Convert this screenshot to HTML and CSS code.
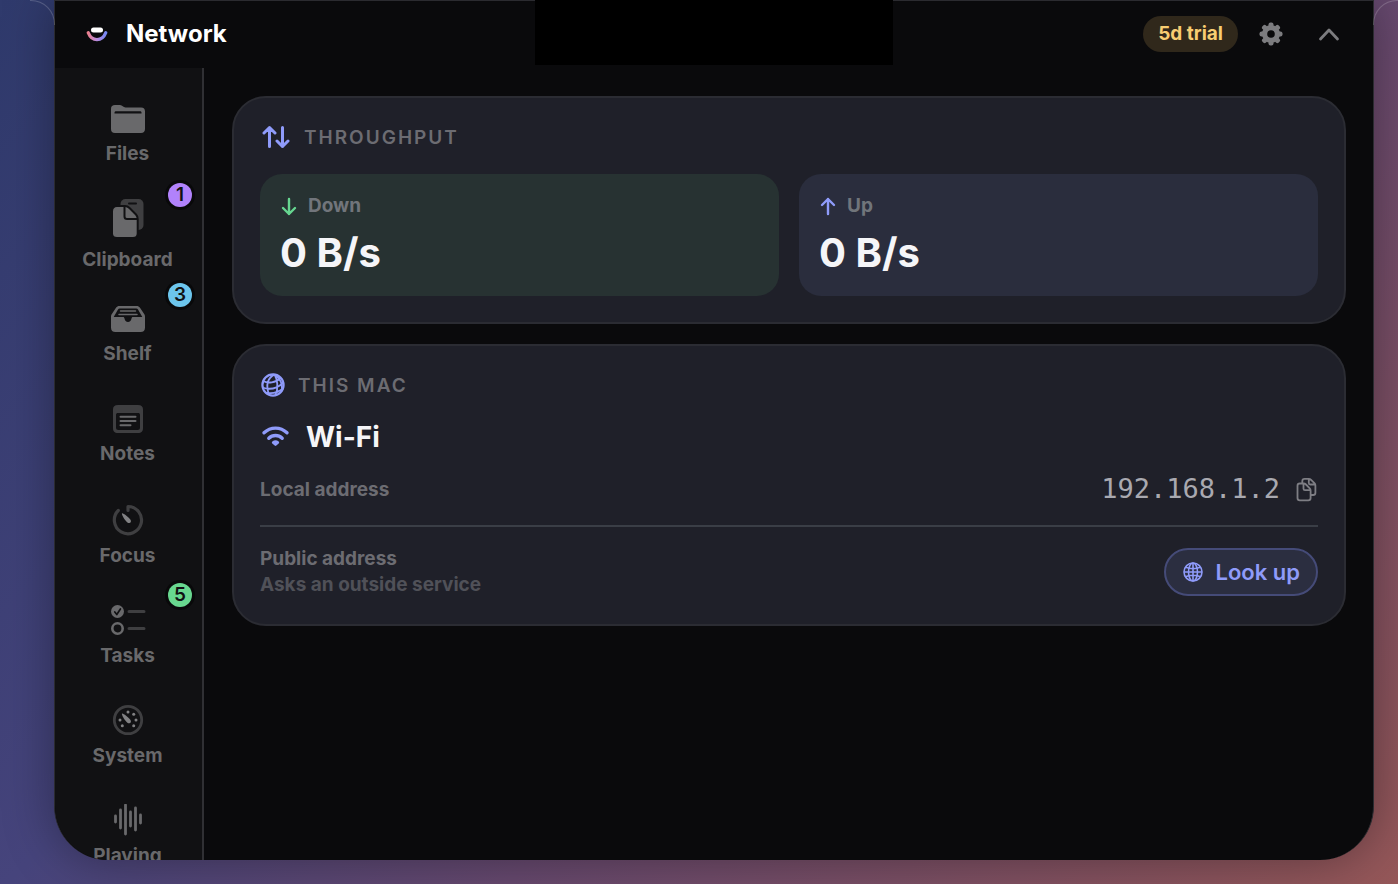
FILE: index.html
```html
<!DOCTYPE html>
<html lang="en">

<head>
  <meta charset="utf-8">
  <title>Network</title>

  <link rel="stylesheet" href="styles.css">
</head>

<body>
  <div class="panel">
    <div class="notch"></div>

    <header class="topbar">
      <svg class="logo" width="24" height="24" viewBox="0 0 24 24" fill="none">
        <defs>
          <linearGradient id="smile" x1="2" y1="0" x2="22" y2="0" gradientUnits="userSpaceOnUse">
            <stop offset="0" stop-color="#ee7f86" />
            <stop offset="0.5" stop-color="#b98be0" />
            <stop offset="1" stop-color="#6d86f5" />
          </linearGradient>
        </defs>
        <path d="M3.2 10.7c1.8 4.600 5 7 8.800 7s7-2.400 8.800-7" stroke="url(#smile)" stroke-width="3.200" stroke-linecap="round" />
        <rect x="6" y="5.500" width="12" height="5" rx="2.500" fill="#fff" />
      </svg>
      <h1>Network</h1>

      <button class="trial">5d trial</button>
      <button class="icon-btn" aria-label="Settings">
        <svg width="24" height="24" viewBox="0 0 24 24">
          <g fill="#7c7c7f">
            <rect x="9.500" y="0.500" width="5" height="23" rx="2" />
            <rect x="9.500" y="0.500" width="5" height="23" rx="2" transform="rotate(45 12 12)" />
            <rect x="9.500" y="0.500" width="5" height="23" rx="2" transform="rotate(90 12 12)" />
            <rect x="9.500" y="0.500" width="5" height="23" rx="2" transform="rotate(135 12 12)" />
            <circle cx="12" cy="12" r="9" />
          </g>
          <circle cx="12" cy="12" r="3.800" fill="#0a0a0c" />
        </svg>
      </button>
      <button class="icon-btn" aria-label="Collapse">
        <svg width="24" height="24" viewBox="0 0 24 24" fill="none" stroke="#7c7c7f" stroke-width="2.800" stroke-linecap="round" stroke-linejoin="round">
          <path d="M3.500 17 12 8 20.500 17" />
        </svg>
      </button>
    </header>

    <div class="content">
      <nav class="sidebar">
        <a class="nav-item" href="#files">
          <svg width="36" height="32" viewBox="0 0 36 32">
            <path fill="#69696b" d="M1 6c0-3 1.500-4 4-4h5c2.500 0 3 2.500 5.500 2.500H31c2.800 0 4 1.500 4 4V26c0 2.700-1.500 4-4 4H5c-2.700 0-4-1.500-4-4z" />
            <path d="M4.500 10.500V9.800c0-1 .5-1.500 1.500-1.500h24c1 0 1.500.5 1.500 1.500v.7z" fill="#111113" />
          </svg>
          <span>Files</span>
        </a>
        <a class="nav-item nav-item--tall" href="#clipboard">
          <svg width="36" height="46" viewBox="0 0 36 46">
            <rect x="10.500" y="4" width="23" height="31" rx="5" fill="#3f3f41" />
            <rect x="18" y="7.500" width="9" height="2" rx="1" fill="#111113" />
            <path d="M7 11h8c2 0 3 .5 4.500 2l6.500 6.500c1.300 1.400 1.700 2.500 1.700 4.500v14.500c0 3-1.700 4.500-4.700 4.500H7c-3 0-5-1.500-5-4.500v-22C2 13 4 11 7 11z" fill="#69696b" stroke="#111113" stroke-width="2" />
            <path d="M14.500 12v9.500c0 1.800.8 2.600 2.600 2.600h10" fill="none" stroke="#111113" stroke-width="2" />
          </svg>
          <span>Clipboard</span>
          <span class="badge badge--purple">1</span>
        </a>
        <a class="nav-item" href="#shelf">
          <svg width="36" height="32" viewBox="0 0 36 32">
            <path fill="#69696b" d="M9.500 3h17c1.600 0 2.600.5 3.500 1.800l4 6c.8 1.200 1 2 1 3.200v10.500c0 3-1.500 4.500-4.500 4.500h-25C2.500 29 1 27.500 1 24.500V14c0-1.200.2-2 1-3.200l4-6C6.900 3.500 7.900 3 9.500 3z" />
            <path d="M9.800 5.500h16.400c.9 0 1.400.3 1.800.9l4.300 7.600H23c-1 0-1.300.6-1.500 1.500-.4 2.200-1.600 3.500-3.500 3.500s-3.100-1.300-3.500-3.500c-.2-.9-.5-1.500-1.500-1.500H3.700L8 6.400c.4-.6.9-.9 1.800-.9z" fill="#111113" />
            <path d="M10.500 8h15M9 11.500h18" stroke="#69696b" stroke-width="1.500" stroke-linecap="round" />
          </svg>
          <span>Shelf</span>
          <span class="badge badge--blue">3</span>
        </a>
        <a class="nav-item" href="#notes">
          <svg width="36" height="32" viewBox="0 0 36 32">
            <path fill="#3f3f41" fill-rule="evenodd" d="M8 2h20c3.500 0 5 1.500 5 4.500v18.500c0 3.500-1.500 5-5 5H8c-3.500 0-5-1.500-5-5V6.500C3 3.500 4.500 2 8 2zM6 12v12.500C6 26.200 6.800 27 8.500 27h19c1.700 0 2.500-.8 2.500-2.500V12c0-1.500-.8-2-2-2H8c-1.200 0-2 .5-2 2z" />
            <path d="M10.500 13.800h15M10.500 18h15M10.500 22.300h10" stroke="#69696b" stroke-width="2" stroke-linecap="round" />
          </svg>
          <span>Notes</span>
        </a>
        <a class="nav-item nav-item--low" href="#focus">
          <svg width="36" height="32" viewBox="0 0 36 32" fill="none">
            <path d="M18 6.500V2.500A13.600 13.600 0 1 1 8.300 6.500" stroke="#3f3f41" stroke-width="3.200" stroke-linecap="round" stroke-linejoin="round" />
            <path d="M12 9.300c1-.6 6.200 3.600 8.300 6.200 1.800 2.300-.7 4.700-2.900 3C14.800 16.400 11.200 10.300 12 9.300z" fill="#828284" />
          </svg>
          <span>Focus</span>
        </a>
        <a class="nav-item nav-item--low" href="#tasks">
          <svg width="36" height="32" viewBox="0 0 36 32" fill="none">
            <circle cx="7.500" cy="7.500" r="6.500" fill="#69696b" />
            <path d="M4.800 8l2 2.500 3.600-5.500" stroke="#111113" stroke-width="1.700" stroke-linecap="round" stroke-linejoin="round" />
            <circle cx="7.500" cy="24.500" r="5.200" stroke="#69696b" stroke-width="2.600" />
            <path d="M19 7.500h15M19 24.500h15" stroke="#3f3f41" stroke-width="3" stroke-linecap="round" />
          </svg>
          <span>Tasks</span>
          <span class="badge badge--green">5</span>
        </a>
        <a class="nav-item nav-item--low" href="#system">
          <svg width="36" height="32" viewBox="0 0 36 32" fill="none">
            <circle cx="18" cy="16" r="13.700" stroke="#3f3f41" stroke-width="2.800" />
            <path d="M12 9.500c1-.6 6.200 3.600 8.300 6.200 1.800 2.300-.7 4.700-2.900 3C14.800 16.600 11.200 10.500 12 9.500z" fill="#828284" />
            <g fill="#828284">
              <circle cx="18" cy="8" r="1.500" />
              <circle cx="23.700" cy="10.300" r="1.500" />
              <circle cx="26" cy="16" r="1.500" />
              <circle cx="23.700" cy="21.700" r="1.500" />
              <circle cx="12.300" cy="21.700" r="1.500" />
              <circle cx="10" cy="16" r="1.500" />
            </g>
          </svg>
          <span>System</span>
        </a>
        <a class="nav-item nav-item--low" href="#playing">
          <svg width="36" height="32" viewBox="0 0 36 32">
            <path d="M5.500 12v6M10.500 6v18M15.500 1v29M20.500 8v14M25.500 4v22M30.500 11v8" stroke="#69696b" stroke-width="2.800" stroke-linecap="round" />
          </svg>
          <span>Playing</span>
        </a>
      </nav>

      <main class="main">
        <section class="card">
          <h2 class="card-title card-title--wide">
            <svg width="30" height="26" viewBox="0 0 30 26" fill="none" stroke="#8f9bfa" stroke-width="3" stroke-linecap="round" stroke-linejoin="round">
              <path d="M9.500 22.500v-19M4 9 9.500 3.500 15 9M22.500 3.500v19M17 17l5.500 5.500L28 17" />
            </svg>
            Throughput
          </h2>
          <div class="tiles">
            <div class="tile tile--down">
              <div class="tile-label">
                <svg width="18" height="20" viewBox="0 0 18 20" fill="none" stroke="#66d690" stroke-width="2.400" stroke-linecap="round" stroke-linejoin="round">
                  <path d="M9 3v15M3 12l6 6 6-6" />
                </svg>
                Down
              </div>
              <div class="tile-value">0 B/s</div>
            </div>
            <div class="tile tile--up">
              <div class="tile-label">
                <svg width="18" height="20" viewBox="0 0 18 20" fill="none" stroke="#8f9bfa" stroke-width="2.400" stroke-linecap="round" stroke-linejoin="round">
                  <path d="M9 18V3M3 9l6-6 6 6" />
                </svg>
                Up
              </div>
              <div class="tile-value">0 B/s</div>
            </div>
          </div>
        </section>

        <section class="card">
          <h2 class="card-title">
            <svg width="26" height="26" viewBox="0 0 26 26" fill="none" stroke="#8f9bfa" stroke-width="1.800">
              <circle cx="13" cy="13" r="10.600" stroke-width="2.200" />
              <path d="M14.500 2.400C8 6 5.500 13 9 22.500M14.500 2.400c3 5.500 4 13 1 21M14.500 2.400c5 3.500 8 8.500 7.500 15M3 9c5 2.500 12.500 2 17.500-3M2.500 15.500c7 2.500 14.500 1 20.500-4.500M5.500 20.500c6 1.500 12.500 0 17.500-4" />
            </svg>
            This Mac
          </h2>

          <div class="connection">
            <svg width="32" height="26" viewBox="0 0 32 26" fill="none" stroke="#8f9bfa" stroke-width="3.400" stroke-linecap="round">
              <path d="M4 8.800c6.600-6.300 16.400-6.300 23 0M8.800 14.200c3.800-3.700 9.600-3.700 13.400 0" />
              <path d="M15.500 20.700l-2.400-2.200c1.400-1.200 3.400-1.200 4.800 0z" fill="#8f9bfa" stroke-width="2.500" stroke-linejoin="round" />
            </svg>
            <h3>Wi-Fi</h3>
          </div>

          <div class="row row--local">
            <span class="row-label">Local address</span>
            <code class="address">192.168.1.2</code>
            <button class="copy-btn" aria-label="Copy address">
              <svg width="22" height="26" viewBox="0 0 22 26" fill="none" stroke="#7e7e84" stroke-width="1.800" stroke-linejoin="round">
                <path d="M3.800 7.500h3.700c1.100 0 1.800.3 2.500 1l3.700 3.800c.7.7.9 1.400.9 2.400v7.300c0 1.600-.8 2.300-2.300 2.300H3.800c-1.500 0-2.300-.7-2.300-2.300V9.800c0-1.600.8-2.300 2.300-2.300z" />
                <path d="M7.500 7.700v5c0 1 .5 1.500 1.500 1.500h5.300M6.300 7.300V5.200c0-1.600.8-2.300 2.300-2.300h4.200c1 0 1.600.3 2.300 1l3.300 3.300c.7.7 1 1.300 1 2.300v7.200c0 1.600-.8 2.300-2.300 2.300h-2.300M12.800 3.200v3.800c0 1 .5 1.500 1.500 1.500h4.800" />
              </svg>
            </button>
          </div>

          <div class="row row--public">
            <div class="row-text">
              <span class="row-label">Public address</span>
              <span class="row-hint">Asks an outside service</span>
            </div>
            <button class="lookup-btn">
              <svg width="22" height="22" viewBox="0 0 22 22" fill="none" stroke="#8f9bfa" stroke-width="1.600">
                <circle cx="11" cy="11" r="9" />
                <ellipse cx="11" cy="11" rx="4.500" ry="9" />
                <path d="M11 2v18M2 11h18M3.500 6.300c4.500 1.700 10.500 1.700 15 0M3.500 15.700c4.500-1.700 10.500-1.700 15 0" />
              </svg>
              Look up
            </button>
          </div>
        </section>
      </main>
    </div>
  </div>
</body>

</html>
```
FILE: styles.css
```css
* {
  margin: 0;
  padding: 0;
  box-sizing: border-box;
}

:root {
  --panel: #0a0a0c;
  --sidebar: #111113;
  --card: #1f2029;
  --line: #303034;
  --muted: #6c6c72;
  --accent: #8f9bfa;
}

body {
  height: 100vh;
  padding: 0 24px 24px 54px;
  overflow: hidden;
  font-family: 'Inter', 'Liberation Sans', sans-serif;
  font-size: 19px;
  font-weight: 700;
  color: #f5f5f8;
  background: linear-gradient(135deg, #2f3a6c 0%, #46447c 39%, #67496f 61%, #955758 100%);
}

button {
  font: inherit;
  border: none;
  background: none;
  cursor: pointer;
}

svg {
  display: block;
  flex-shrink: 0;
}

.panel {
  position: relative;
  display: flex;
  flex-direction: column;
  height: 100%;
  background-color: var(--panel);
  border: 1px solid #2b2b30;
  border-bottom: none;
  border-radius: 0 0 54px 54px;
  box-shadow: 0 0 50px rgba(0, 0, 0, 0.35);
}

/* Flared corners where the panel meets the menu bar */
.panel::before,
.panel::after {
  content: '';
  position: absolute;
  top: -1px;
  width: 24px;
  height: 24px;
  border-top: 1px solid rgba(255, 255, 255, 0.18);
}

.panel::before {
  right: 100%;
  border-right: 1px solid rgba(255, 255, 255, 0.18);
  border-top-right-radius: 24px;
}

.panel::after {
  left: 100%;
  border-left: 1px solid rgba(255, 255, 255, 0.18);
  border-top-left-radius: 24px;
}

.notch {
  position: absolute;
  top: -1px;
  left: 50%;
  width: 358px;
  height: 65px;
  margin-left: -179px;
  background-color: #000;
}

.topbar {
  display: flex;
  align-items: center;
  height: 67px;
  padding: 0 32px 2px 30px;
}

.topbar h1 {
  flex: 1;
  margin-left: 17px;
  font-size: 24px;
  font-weight: 700;
  color: #fff;
}

.trial {
  height: 36px;
  padding: 0 15px;
  border-radius: 18px;
  background-color: #30281b;
  color: #f8cd72;
}

.icon-btn {
  margin-left: 21px;
}

.icon-btn + .icon-btn {
  margin-left: 34px;
}

.content {
  flex: 1;
  display: flex;
  min-height: 0;
  border-radius: 0 0 54px 54px;
  overflow: hidden;
}

/* Sidebar */
.sidebar {
  flex: 0 0 149px;
  padding: 19px 2px 0 0;
  background-color: var(--sidebar);
  border-right: 2px solid var(--line);
  overflow: hidden;
}

.nav-item {
  position: relative;
  display: flex;
  flex-direction: column;
  align-items: center;
  gap: 7px;
  height: 100px;
  padding-top: 16px;
  line-height: 24px;
  color: #69696b;
  text-decoration: none;
}

.nav-item--tall {
  padding-top: 8px;
}

.nav-item--low {
  gap: 8px;
  padding-top: 17px;
}

.badge {
  position: absolute;
  top: -4px;
  right: 8px;
  width: 24px;
  height: 24px;
  border-radius: 50%;
  box-shadow: 0 0 0 3px #09090a;
  font-size: 19px;
  font-weight: 600;
  text-align: center;
  color: #111113;
}

.badge--purple {
  background-color: #b182fb;
}

.badge--blue {
  background-color: #6cc5ec;
}

.badge--green {
  background-color: #68d78f;
}

/* Cards */
.main {
  flex: 1;
  display: flex;
  flex-direction: column;
  gap: 20px;
  padding: 28px 27px 28px 28px;
}

.card {
  padding: 26px;
  background-color: var(--card);
  border: 2px solid #2b2c33;
  border-radius: 34px;
}

.card-title {
  display: flex;
  align-items: center;
  gap: 12px;
  height: 26px;
  margin-bottom: 24px;
  font-size: 19px;
  font-weight: 600;
  letter-spacing: 2px;
  text-transform: uppercase;
  color: var(--muted);
}

.card-title--wide {
  gap: 14px;
}

.tiles {
  display: grid;
  grid-template-columns: 1fr 1fr;
  gap: 20px;
}

.tile {
  padding: 19px 20px 21px;
  border-radius: 22px;
}

.tile--down {
  background-color: #273232;
}

.tile--up {
  background-color: #2a2d3d;
}

.tile-label {
  display: flex;
  align-items: center;
  gap: 10px;
  line-height: 26px;
  margin-bottom: 12px;
  color: #71757b;
}

.tile-value {
  font-size: 40px;
  line-height: 44px;
}

.connection {
  display: flex;
  align-items: center;
  gap: 14px;
  height: 30px;
  margin-bottom: 22px;
}

.connection h3 {
  font-size: 28px;
}

.row {
  display: flex;
  align-items: center;
}

.row-label {
  color: var(--muted);
}

.row--local {
  padding-bottom: 21px;
  border-bottom: 2px solid #3a3e46;
}

.address {
  margin-left: auto;
  font-family: 'DejaVu Sans Mono', 'Liberation Mono', monospace;
  font-size: 27px;
  font-weight: 400;
  line-height: 30px;
  color: #a9a9b0;
}

.copy-btn {
  margin-left: 16px;
}

.row--public {
  justify-content: space-between;
  padding-top: 19px;
}

.row-text {
  display: flex;
  flex-direction: column;
  line-height: 26px;
}

.row-hint {
  color: #505158;
}

.lookup-btn {
  display: flex;
  align-items: center;
  gap: 12px;
  height: 48px;
  padding: 0 16px;
  border: 2px solid #454b78;
  border-radius: 24px;
  background-color: #2b2e40;
  font-size: 22px;
  font-weight: 600;
  color: var(--accent);
}
```
